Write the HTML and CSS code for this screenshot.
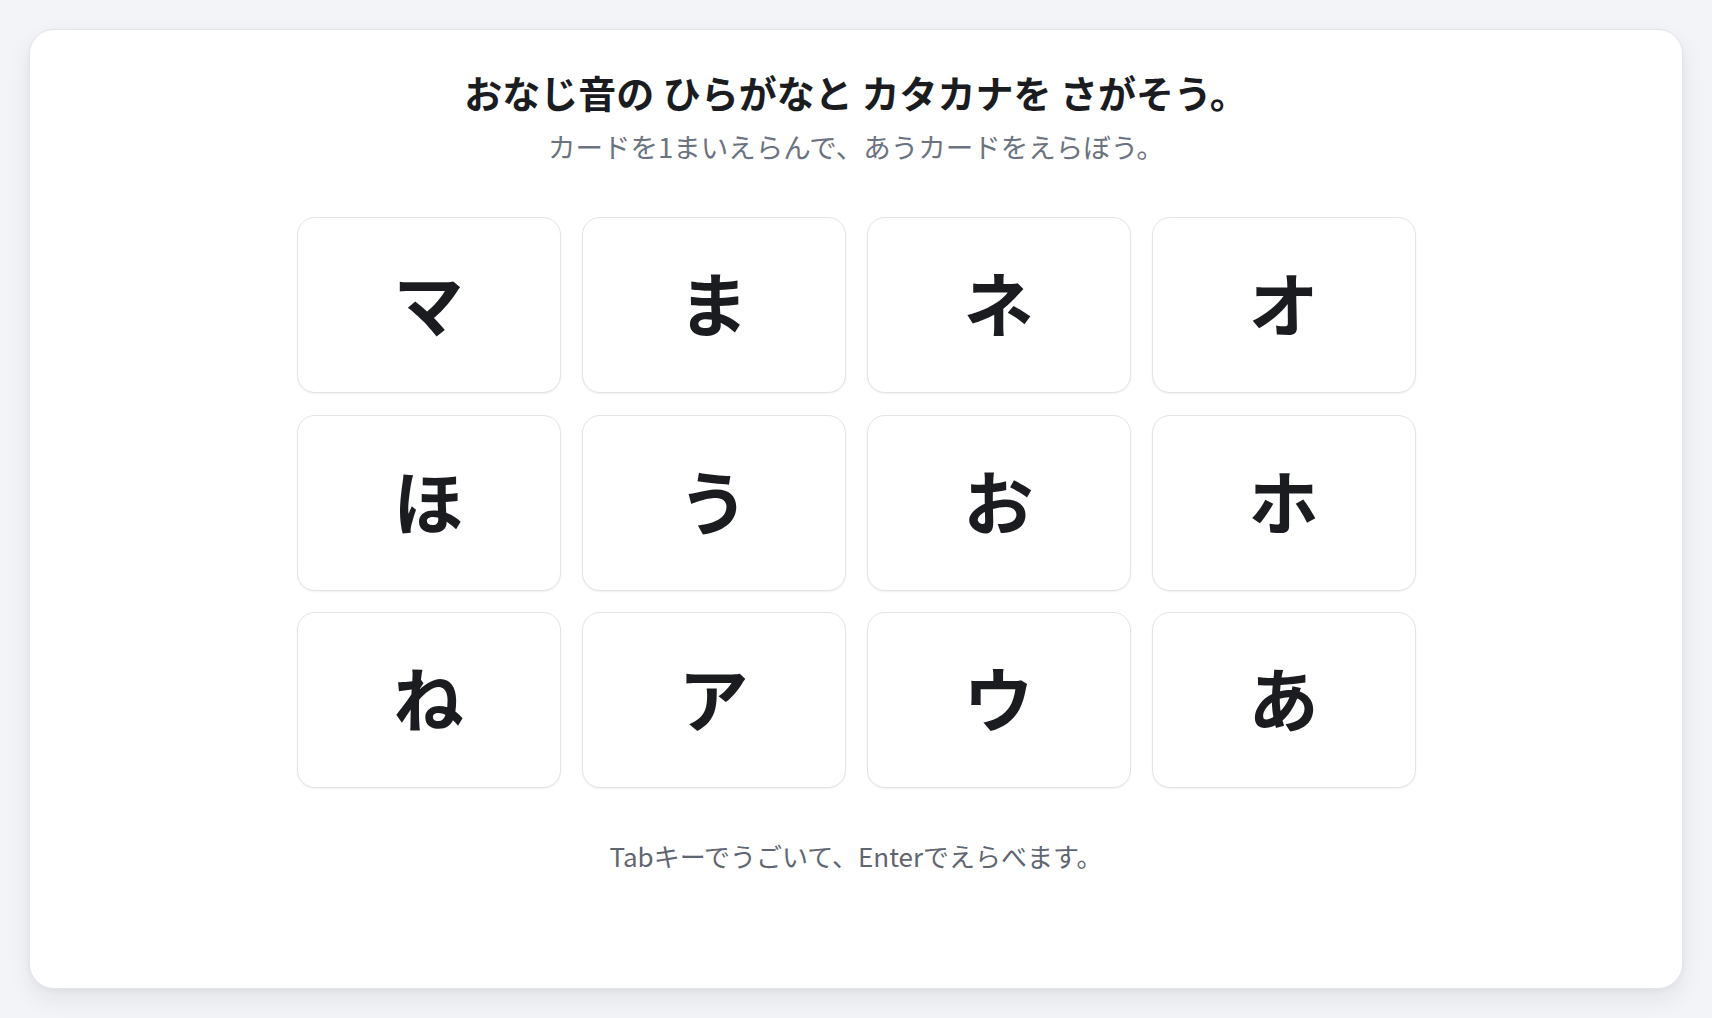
FILE: index.html
```html
<!DOCTYPE html>
<html lang="ja">
<head>
<meta charset="utf-8">
<title>おなじ音の ひらがなと カタカナを さがそう。</title>
<link rel="stylesheet" href="styles.css">
</head>
<body>
<main class="panel">
  <h1 class="title">おなじ音の ひらがなと カタカナを さがそう。</h1>
  <p class="subtitle">カードを1まいえらんで、あうカードをえらぼう。</p>
  <div class="grid" role="grid">
    <button class="card">マ</button>
    <button class="card">ま</button>
    <button class="card">ネ</button>
    <button class="card">オ</button>
    <button class="card">ほ</button>
    <button class="card">う</button>
    <button class="card">お</button>
    <button class="card">ホ</button>
    <button class="card">ね</button>
    <button class="card">ア</button>
    <button class="card">ウ</button>
    <button class="card">あ</button>
  </div>
  <p class="hint">Tabキーでうごいて、Enterでえらべます。</p>
</main>
</body>
</html>
```
FILE: styles.css
```css
* { box-sizing: border-box; }
html, body { height: 100%; }
body {
  margin: 0;
  padding: 29px;
  background: #f3f4f7;
  font-family: "Noto Sans CJK JP", "Noto Sans", sans-serif;
}
.panel {
  height: 960px;
  background: #ffffff;
  border: 1px solid #e3e5e9;
  border-radius: 25px;
  box-shadow: 0 10px 24px rgba(17, 24, 39, 0.07), 0 2px 6px rgba(17, 24, 39, 0.04);
  padding: 37px 0 0;
  display: flex;
  flex-direction: column;
  align-items: center;
}
.title {
  margin: 0;
  font-size: 38px;
  line-height: 50px;
  font-weight: 700;
  color: #1b1c1f;
}
.subtitle {
  margin: 9px 0 0;
  font-size: 27.5px;
  line-height: 40px;
  color: #6b7280;
  font-weight: 400;
}
.grid {
  margin-top: 51px;
  width: 1119px;
  display: grid;
  grid-template-columns: repeat(4, 1fr);
  grid-auto-rows: 176px;
  gap: 21.5px 21px;
}
.card {
  appearance: none;
  background: #ffffff;
  border: 1.5px solid #e2e4e8;
  border-radius: 18px;
  box-shadow: 0 1px 2px rgba(17, 24, 39, 0.06);
  font-family: "Noto Sans CJK JP", sans-serif;
  font-size: 70px;
  line-height: 1;
  font-weight: 700;
  color: #1b1c1f;
  display: flex;
  align-items: center;
  justify-content: center;
  padding: 0 0 6px;
  cursor: pointer;
}
.hint {
  margin: 49px 0 0;
  font-size: 26px;
  line-height: 37px;
  color: #5f6672;
}
```
